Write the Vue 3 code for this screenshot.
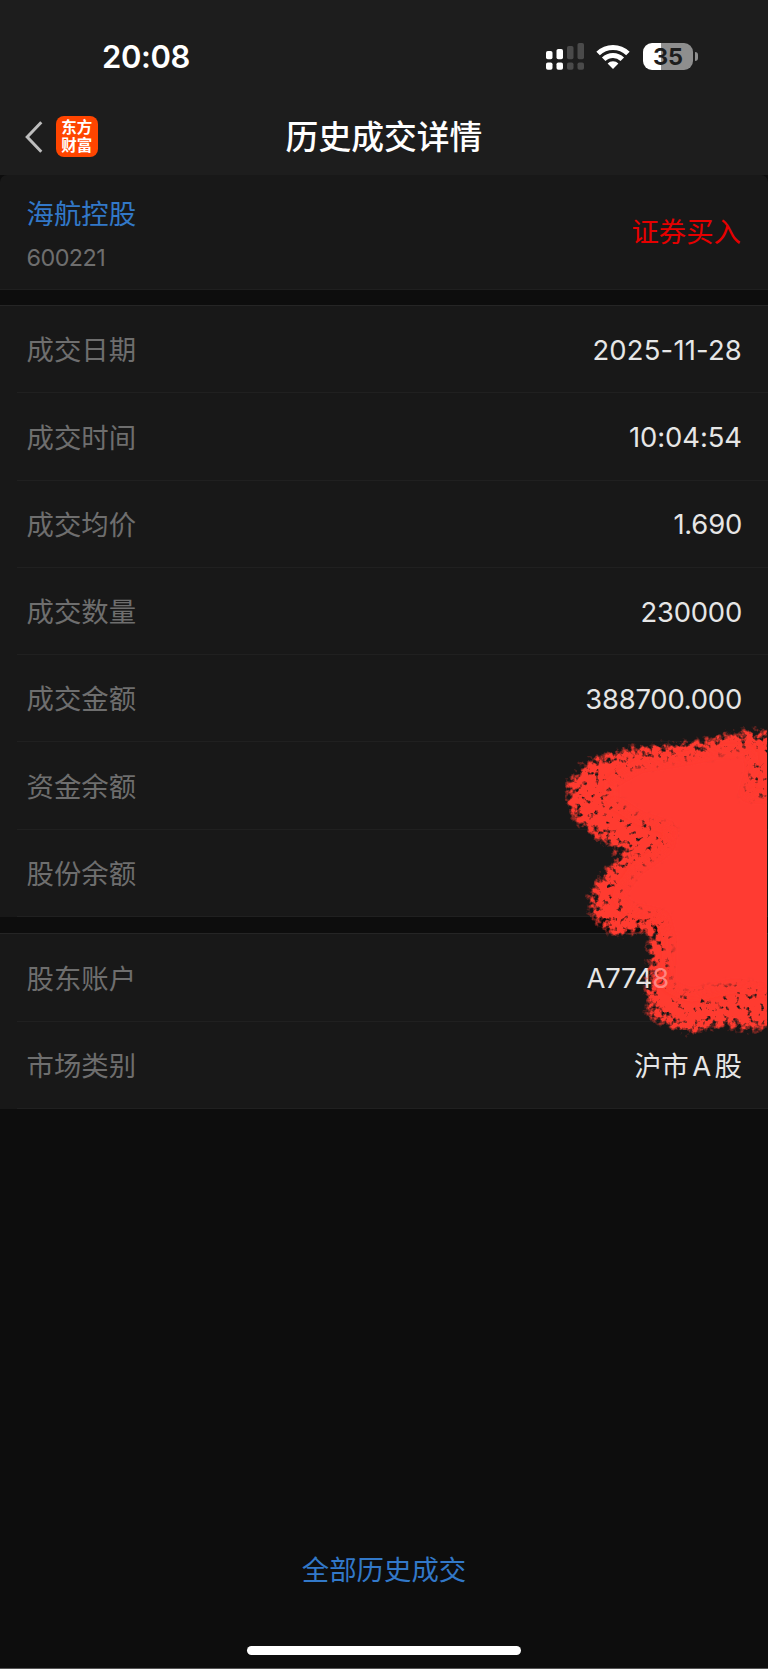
<script setup>
const stock = { name: '海航控股', code: '600221', action: '证券买入' }

const dealRows = [
  { label: '成交日期', value: '2025-11-28', kind: 'date' },
  { label: '成交时间', value: '10:04:54', kind: 'time' },
  { label: '成交均价', value: '1.690' },
  { label: '成交数量', value: '230000' },
  { label: '成交金额', value: '388700.000' },
  { label: '资金余额', value: '' },
  { label: '股份余额', value: '' },
]

const signalBars = [
  { x: 0, top: 8, on: true },
  { x: 10.5, top: 6, on: true },
  { x: 21, top: 3, on: false },
  { x: 31.5, top: 0, on: false },
]
</script>

<template>
  <main class="screen">
    <header class="top">
      <div class="status">
        <span class="clock">20:08</span>
        <div class="status-icons">
          <svg class="signal" width="38" height="27" viewBox="0 0 38 27">
            <g v-for="bar in signalBars" :key="bar.x" :fill="bar.on ? '#fff' : '#4a4a4a'">
              <rect :x="bar.x" :y="bar.top" width="6.5" :height="16.3 - bar.top" rx="1.8" />
              <rect :x="bar.x" y="19.5" width="6.5" height="7.3" rx="1.8" />
            </g>
          </svg>
          <svg class="wifi" width="34" height="26" viewBox="0 0 34 26">
            <g fill="none" stroke="#fff" stroke-width="5">
              <path d="M2.1 9.5 A21.3 21.3 0 0 1 31.9 9.5" />
              <path d="M7.7 15.3 A13.2 13.2 0 0 1 26.3 15.3" />
            </g>
            <path d="M17 25 L11.6 19.5 A7.6 7.6 0 0 1 22.4 19.5 Z" fill="#fff" />
          </svg>
          <div class="battery"><span>35</span></div>
          <i class="battery-cap"></i>
        </div>
      </div>

      <nav class="nav">
        <div class="nav-left">
          <svg width="18" height="32" viewBox="0 0 18 32">
            <path d="M16.3 1.3 L2.2 16 L16.3 30.7" fill="none" stroke="#bdbdbd" stroke-width="3" />
          </svg>
          <div class="logo"><span>东方</span><span>财富</span></div>
        </div>
        <h1>历史成交详情</h1>
      </nav>
    </header>

    <div class="stock-wrap">
      <section class="stock">
        <div class="stock-info">
          <p class="stock-name">{{ stock.name }}</p>
          <p class="stock-code">{{ stock.code }}</p>
        </div>
        <span class="action">{{ stock.action }}</span>
      </section>
    </div>

    <section class="group">
      <div v-for="row in dealRows" :key="row.label" class="row">
        <span class="label">{{ row.label }}</span>
        <span class="value" :class="row.kind">{{ row.value }}</span>
      </div>
    </section>

    <section class="group accounts">
      <div class="row">
        <span class="label">股东账户</span>
        <span class="value masked">A774<span class="faded">8</span></span>
      </div>
      <div class="row">
        <span class="label">市场类别</span>
        <span class="value market">沪市<span class="latin">A</span>股</span>
      </div>
    </section>

    <!-- brush strokes over the private values -->
    <svg class="brush" width="227" height="340" viewBox="540 710 227 340">
      <defs>
        <filter
          id="rough"
          filterUnits="userSpaceOnUse"
          color-interpolation-filters="sRGB"
          x="520"
          y="700"
          width="290"
          height="360"
        >
          <feGaussianBlur in="SourceAlpha" stdDeviation="9" result="soft" />
          <feTurbulence type="fractalNoise" baseFrequency="0.17" numOctaves="3" seed="8" />
          <feColorMatrix values="0 0 0 0 0  0 0 0 0 0  0 0 0 0 0  0 0 0 1 0" result="grain" />
          <feComposite
            in="soft"
            in2="grain"
            operator="arithmetic"
            k1="5.4"
            k2="0"
            k3="0"
            k4="-1"
            result="mask"
          />
          <feFlood flood-color="#ff3b30" />
          <feComposite in2="mask" operator="in" />
        </filter>
        <filter id="core" filterUnits="userSpaceOnUse" x="520" y="700" width="320" height="360">
          <feGaussianBlur stdDeviation="5" />
        </filter>
      </defs>
      <g filter="url(#rough)">
        <path
          d="M567 792 L573 772 L589 760 L620 750 L660 745 L694 743 L720 736 L745 731
             L800 734 L800 1024 L764 1026 L748 1033 L735 1026 L715 1025 L695 1034 L680 1032
             L662 1022 L646 1018 L647 990 L652 960 L646 945 L657 934 L640 928 L619 937
             L607 934 L597 920 L586 908 L592 889 L605 870 L622 856 L644 846 L604 846
             L590 829 L570 818 Z"
        />
      </g>
      <path
        filter="url(#core)"
        fill="#ff3b30"
        d="M612 782 L640 766 L690 758 L720 752 L750 752 L752 770 L744 796 L820 800
           L820 985 L765 990 L735 985 L690 995 L668 985 L670 940 L664 916 L628 908
           L618 896 L636 870 L668 848 L672 828 L640 818 L612 800 Z"
      />
    </svg>

    <footer class="bottom">
      <a class="all">全部历史成交</a>
      <div class="home-bar"></div>
    </footer>
  </main>
</template>

<style>
body {
  margin: 0;
  background: #0d0d0d;
}
</style>

<style scoped>
.screen {
  position: relative;
  display: flex;
  flex-direction: column;
  box-sizing: border-box;
  width: 768px;
  height: 1669px;
  overflow: hidden;
  border-bottom: 1px solid #555;
  background: #0d0d0d;
  font-family: Inter, 'Noto Sans CJK SC', sans-serif;
  font-size: 27.4px;
  font-weight: 370;
  color: #e6e6e6;
}

.top {
  height: 175px;
  background: #1d1d1d;
}

.status {
  display: flex;
  align-items: center;
  justify-content: space-between;
  height: 99px;
  padding: 14px 70px 0 102px;
  box-sizing: border-box;
}

.clock {
  padding-top: 1px;
  color: #fff;
  font-size: 31px;
  font-weight: 600;
  line-height: 40px;
  letter-spacing: -0.4px;
}

.status-icons {
  display: flex;
  align-items: center;
}

.wifi {
  margin-left: 12.5px;
}

.battery {
  display: flex;
  align-items: center;
  justify-content: center;
  width: 50px;
  height: 27px;
  margin-left: 13px;
  border-radius: 9px;
  background: linear-gradient(90deg, #fff 35%, #8e8e8e 35%);
  color: #1d1d1d;
  font-size: 23.5px;
  font-weight: 700;
}

.battery-cap {
  width: 3.5px;
  height: 9px;
  margin-left: 1.5px;
  border-radius: 0 5px 5px 0;
  background: #8e8e8e;
}

.nav {
  display: grid;
  grid-template-columns: 1fr auto 1fr;
  align-items: center;
  height: 75px;
}

.nav-left {
  display: flex;
  align-items: center;
  gap: 13px;
  padding-left: 25px;
}

.logo {
  display: flex;
  flex-direction: column;
  align-items: center;
  justify-content: center;
  width: 41.5px;
  height: 41.5px;
  border-radius: 8px;
  background: #ff4500;
  color: #fff;
  font-size: 15.5px;
  font-weight: 700;
  line-height: 17.5px;
}

h1 {
  margin: 0;
  color: #fff;
  font-size: 32.8px;
  font-weight: 500;
  line-height: 40px;
}

.stock-wrap {
  background: #0d0d0d;
}

.stock {
  display: flex;
  align-items: center;
  justify-content: space-between;
  height: 115px;
  padding: 0 27px 0 26.5px;
  box-sizing: border-box;
  border-bottom: 1px solid #1f1f1f;
  border-radius: 7px 7px 0 0;
  background: #181818;
}

p {
  margin: 0;
}

.stock-info {
  padding-top: 4px;
}

.stock-name {
  color: #3278c8;
  line-height: 40px;
}

.stock-code {
  margin-top: 7px;
  color: #6e6e6e;
  font-size: 23.4px;
  line-height: 34px;
  letter-spacing: -0.55px;
}

.action {
  padding-bottom: 4px;
  color: #e60000;
}

.group {
  margin-top: 15px;
  border-top: 1px solid #252525;
  background: #181818;
}

.accounts {
  margin-top: 16.5px;
}

.row {
  display: flex;
  align-items: center;
  justify-content: space-between;
  height: 87.25px;
  margin-left: 17px;
  padding: 0 26px 0 9.5px;
  box-sizing: border-box;
  border-bottom: 1px solid #202020;
}

.label {
  padding-bottom: 1.5px;
  color: #6e6e6e;
}

.value {
  padding-top: 1.5px;
  letter-spacing: -0.2px;
}

.date {
  letter-spacing: 0.2px;
}

.time {
  letter-spacing: -0.05px;
}

.masked {
  margin-right: 73px;
}

.faded {
  position: relative;
  z-index: 2;
  color: #ff8580;
}

.market {
  padding-top: 0;
  padding-bottom: 1.5px;
  letter-spacing: 0;
}

.latin {
  margin: 0 3.5px;
}

.brush {
  position: absolute;
  top: 710px;
  left: 540px;
}

.bottom {
  display: flex;
  flex-direction: column;
  align-items: center;
  margin-top: auto;
  padding-bottom: 13px;
}

.all {
  color: #3278c8;
  line-height: 40px;
}

.home-bar {
  width: 274px;
  height: 9px;
  margin-top: 56px;
  border-radius: 5px;
  background: #fff;
}
</style>
